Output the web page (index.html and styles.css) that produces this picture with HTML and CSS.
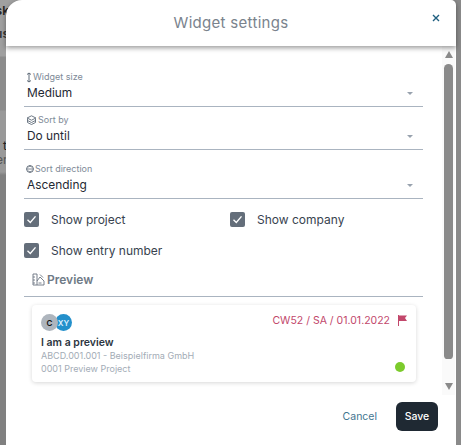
FILE: index.html
```html
<!DOCTYPE html>
<html lang="en">
<head>
  <meta charset="UTF-8" />
  <title>Widget settings</title>
  <link rel="stylesheet" href="styles.css">
</head>
<body>

  <!-- Page behind the dialog -->
  <div class="backdrop">
    <span class="behind b1">sk</span>
    <span class="behind b2">us</span>
    <span class="behind b3">t</span>
    <span class="behind b4">en</span>
  </div>

  <div class="modal">
    <div class="modal-header">
      <h2>Widget settings</h2>
      <svg class="close" width="8" height="8" viewBox="0 0 8 8"><path d="M1 1l6 6M7 1L1 7" stroke="#1f5f80" stroke-width="1.4" fill="none"/></svg>
    </div>

    <div class="modal-body">
      <div class="content">
        <div class="field">
          <div class="field-label">
            <svg width="6" height="11" viewBox="0 0 6 11"><path d="M3 1v9M1 2.500L3 1l2 1.500M1 8.500L3 10l2-1.500" stroke="#5f6b78" fill="none"/></svg>
            Widget size
          </div>
          <div class="field-value">Medium<span class="arrow"></span></div>
        </div>
        <div class="field">
          <div class="field-label">
            <svg width="11" height="10" viewBox="0 0 10 10"><path d="M5 .8L9.400 3 5 5.200.6 3zM1 3.500v4L5 9.500l4-2v-4M1 5.500l4 2 4-2" stroke="#5f6b78" stroke-width=".9" fill="none"/></svg>
            Sort by
          </div>
          <div class="field-value">Do until<span class="arrow"></span></div>
        </div>
        <div class="field third">
          <div class="field-label">
            <svg width="8" height="10" viewBox="0 0 8 10"><circle cx="4" cy="5" r="3.400" stroke="#5f6b78" fill="none"/><path d="M.8 5h6.400M2.500 3.200L4 1.800l1.500 1.400M2.500 6.800L4 8.200l1.500-1.400" stroke="#5f6b78" stroke-width=".8" fill="none"/></svg>
            Sort direction
          </div>
          <div class="field-value">Ascending<span class="arrow"></span></div>
        </div>

        <div class="checks">
          <div class="check"><span class="box"><svg width="11" height="9" viewBox="0 0 11 9"><path d="M1.500 4.800l2.800 2.600 5.200-6" stroke="#fff" stroke-width="1.400" fill="none"/></svg></span>Show project</div>
          <div class="check"><span class="box"><svg width="11" height="9" viewBox="0 0 11 9"><path d="M1.500 4.800l2.800 2.600 5.200-6" stroke="#fff" stroke-width="1.400" fill="none"/></svg></span>Show company</div>
          <div class="check"><span class="box"><svg width="11" height="9" viewBox="0 0 11 9"><path d="M1.500 4.800l2.800 2.600 5.200-6" stroke="#fff" stroke-width="1.400" fill="none"/></svg></span>Show entry number</div>
        </div>

        <div class="preview-title">
          <svg width="13" height="13" viewBox="0 0 13 13"><path d="M1 1h4v11H1zM5 12h7V8L8 4 5 8M1 4h2M1 7h2M1 10h2M6.500 10h3M8 1.500l3 3" stroke="#69737f" stroke-width=".9" fill="none"/></svg>
          Preview
        </div>

        <div class="card">
          <div class="card-top">
            <div class="avatars">
              <span class="avatar blue">XY</span>
              <span class="avatar grey">C</span>
            </div>
            <div class="due">CW52 / SA / 01.01.2022
              <svg width="9" height="11" viewBox="0 0 9 11"><path d="M.5 0v11" stroke="#c2476b"/><path d="M1 .5h8L7 3l2 3H1z" fill="#c2476b"/></svg>
            </div>
          </div>
          <div class="card-title">I am a preview</div>
          <div class="card-bottom">
            <div>
              <div class="card-sub">ABCD.001.001 - Beispielfirma GmbH</div>
              <div class="card-sub">0001 Preview Project</div>
            </div>
            <span class="dot"></span>
          </div>
        </div>
      </div>

      <div class="scrollbar">
        <span class="tri up"></span>
        <span class="thumb"></span>
        <span class="tri down"></span>
      </div>
    </div>

    <div class="modal-footer">
      <button class="cancel">Cancel</button>
      <button class="save">Save</button>
    </div>
  </div>

</body>
</html>
```

FILE: styles.css
```css
html, body {
  height: 100%;
}

body {
  font-family: 'Inter', 'Liberation Sans', sans-serif;
  margin: 0;
  padding: 0 5px 0 6px;
  box-sizing: border-box;
  background: #8a8a8a;
  overflow: hidden;
  color: #1f2933;
}

.backdrop {
  position: absolute;
  top: 0;
  left: 0;
  width: 22px;
  height: 100%;
  overflow: hidden;
  background: linear-gradient(to bottom, #a0a0a0 0, #a0a0a0 56px, #8c8c8c 57px, #8c8c8c 110px, #999 111px, #999 172px, #808080 175px);
}

.behind {
  position: absolute;
  left: -8px;
  width: 20px;
  text-align: right;
  font-size: 12px;
  font-weight: 600;
  color: #222;
}

.b1 { top: 3px; left: -11px; }
.b2 { top: 26px; left: -11px; color: #333; }
.b3 { top: 138px; left: -13px; font-weight: 400; }
.b4 { top: 152px; left: -10px; font-weight: 400; color: #555; }

.modal {
  position: relative;
  background: white;
  height: 445px;
  border-radius: 16px 5px 0 0;
  display: flex;
  flex-direction: column;
}

.modal-header {
  height: 46px;
  flex: none;
  display: flex;
  align-items: center;
  justify-content: center;
  position: relative;
  box-shadow: 0 2px 5px rgba(0, 0, 0, 0.4);
  border-radius: 16px 5px 0 0;
  z-index: 2;
}

.modal-header h2 {
  margin: 0 0 2px 0;
  font-size: 15px;
  font-weight: 400;
  letter-spacing: 0.3px;
  color: #7a838d;
}

.close {
  position: absolute;
  top: 14px;
  right: 16px;
}

.modal-body {
  display: flex;
  height: 347px;
  flex: none;
}

.content {
  width: 399px;
  margin-left: 18px;
  padding-top: 18px;
}

.field {
  height: 43px;
  box-sizing: border-box;
  padding-top: 7px;
  border-bottom: 1px solid #aab4c0;
}

.field.third {
  height: 49px;
  padding-top: 13px;
}

.field-label {
  display: flex;
  align-items: center;
  gap: 1px;
  font-size: 9px;
  line-height: 12px;
  padding-left: 2px;
  color: #7e8a97;
}

.field-value {
  display: flex;
  justify-content: space-between;
  align-items: center;
  font-size: 11.900px;
  line-height: 18px;
  margin-top: 1px;
  padding: 0 10px 0 3px;
}

.arrow {
  width: 0;
  height: 0;
  border-left: 3px solid transparent;
  border-right: 3px solid transparent;
  border-top: 3px solid #98a2ae;
}

.checks {
  display: grid;
  grid-template-columns: 206px 1fr;
  row-gap: 16px;
  margin-top: 13px;
}

.check {
  display: flex;
  align-items: center;
  gap: 12px;
  font-size: 12px;
  line-height: 15px;
  color: #38434f;
}

.box {
  width: 15px;
  height: 15px;
  border-radius: 2px;
  background: #646e7a;
  display: flex;
  align-items: center;
  justify-content: center;
}

.preview-title {
  display: flex;
  align-items: center;
  gap: 2px;
  height: 39px;
  box-sizing: border-box;
  padding: 8px 0 3px 8px;
  border-bottom: 1px solid #aab4c0;
  font-size: 12px;
  font-weight: 600;
  color: #6f7a86;
}

.card {
  margin: 8px 7px 0 8px;
  height: 77px;
  box-sizing: border-box;
  padding: 9px 9px 0 9px;
  border-radius: 4px;
  box-shadow: 0 1px 4px rgba(0, 0, 0, 0.16);
}

.card-top {
  display: flex;
  justify-content: space-between;
  height: 18px;
}

.avatars {
  display: flex;
  flex-direction: row-reverse;
  justify-content: flex-end;
}

.avatar {
  width: 17px;
  height: 17px;
  border-radius: 50%;
  display: flex;
  align-items: center;
  justify-content: center;
  font-size: 8px;
  font-weight: 600;
}

.avatar.grey {
  background: #aeb5bd;
  color: #111;
  position: relative;
}

.avatar.blue {
  background: #2490cb;
  color: #dcefff;
  margin-left: -3px;
}

.due {
  display: flex;
  gap: 8px;
  margin-top: 1px;
  font-size: 10.500px;
  line-height: 12px;
  color: #c2476b;
}

.card-title {
  font-size: 10.500px;
  font-weight: 600;
  line-height: 13px;
  margin-top: 4px;
  color: #2b3540;
}

.card-bottom {
  display: flex;
  justify-content: space-between;
  align-items: flex-end;
}

.card-sub {
  font-size: 9px;
  line-height: 13px;
  color: #a3acb6;
}

.dot {
  width: 10px;
  height: 10px;
  border-radius: 50%;
  background: #7ccb2c;
  margin: 0 2px 3px 0;
}

.scrollbar {
  margin-left: 19px;
  padding: 5px 2px 0 2px;
  height: 344px;
  width: 9px;
  display: flex;
  flex-direction: column;
  align-items: center;
  background: #fafafa;
}

.thumb {
  flex: none;
  width: 9px;
  height: 295px;
  margin-top: 6px;
  border-radius: 5px 5px 4px 4px;
  background: #8a8a8a;
}

.tri {
  flex: none;
  width: 0;
  height: 0;
  border-left: 4.500px solid transparent;
  border-right: 4.500px solid transparent;
}

.tri.up {
  border-bottom: 7px solid #8a8a8a;
}

.tri.down {
  margin-top: 24px;
  border-top: 7px solid #8a8a8a;
}

.modal-footer {
  display: flex;
  justify-content: flex-end;
  align-items: flex-start;
  gap: 19px;
  padding: 9px 18px 0 0;
}

.modal-footer button {
  border: none;
  font-family: inherit;
  font-size: 10.500px;
  padding: 0;
}

.cancel {
  background: none;
  color: #3f7590;
  height: 29px;
}

.save {
  width: 42px;
  height: 29px;
  border-radius: 6px;
  background: #1f2933;
  color: white;
  font-weight: 500;
}
```
